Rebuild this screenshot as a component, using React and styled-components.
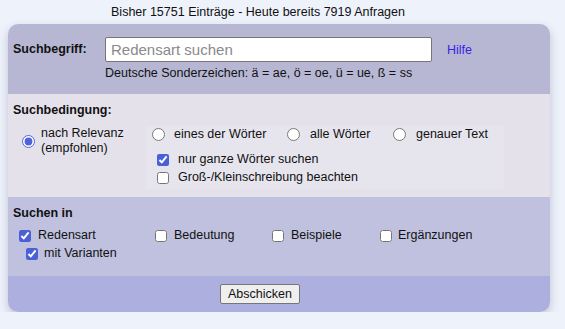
import React from 'react';
import styled, { createGlobalStyle } from 'styled-components';

const GlobalStyle = createGlobalStyle`
  body {
    margin: 0;
    background: #eef2fb;
    font-family: 'Liberation Sans', Arial, sans-serif;
    font-size: 12.5px;
    color: #111;
  }
`;

const Page = styled.div`
  padding: 4px 8px 0 8px;
`;

const Stats = styled.div`
  width: 500px;
  text-align: center;
  line-height: 16px;
  height: 20px;
`;

const Card = styled.form`
  width: 542px;
  border-radius: 10px;
  overflow: hidden;
  box-shadow: 0 4px 10px rgba(60, 60, 90, 0.25);
`;

const Section = styled.div`
  background: ${({ $bg }) => $bg};
  padding: ${({ $pad }) => $pad};
`;

const Heading = styled.div`
  font-weight: bold;
  line-height: 15px;
`;

const TermRow = styled.div`
  display: grid;
  grid-template-columns: 92px 327px auto;
  align-items: center;
`;

const SearchInput = styled.input`
  box-sizing: border-box;
  width: 327px;
  height: 25px;
  margin: 0;
  padding: 0 5px;
  border: 1px solid #767676;
  border-radius: 2px;
  font-family: 'Liberation Sans', Arial, sans-serif;
  font-size: 15px;
  background: #fff;
  &::placeholder {
    color: #8a8a8a;
  }
`;

const HelpLink = styled.a`
  color: #3a1fe6;
  text-decoration: none;
  padding-left: 15px;
`;

const Hint = styled.div`
  grid-column: 2 / 4;
  margin-top: 4px;
  line-height: 15px;
`;

const ConditionGrid = styled.div`
  display: grid;
  grid-template-columns: 135px auto;
  margin-top: 8px;
`;

const Relevance = styled.label`
  display: flex;
  align-items: center;
  gap: 6px;
  padding-left: 9px;
  align-self: start;
  height: 30px;
  line-height: 15px;
`;

const Options = styled.div`
  display: flex;
  flex-direction: column;
  padding: 0 0 4px 6px;
  margin-left: -2px;
  background: #e6e4ed;
  width: 352px;
`;

const RadioRow = styled.div`
  display: flex;
  height: 16px;
  align-items: center;
`;

const Choice = styled.label`
  display: flex;
  align-items: center;
  gap: ${({ $gap }) => $gap || 7}px;
  width: ${({ $w }) => ($w ? `${$w}px` : 'auto')};
  padding-left: ${({ $indent }) => $indent || 0}px;
  line-height: 15px;
  white-space: nowrap;
`;

const Radio = styled.input.attrs({ type: 'radio' })`
  width: 13px;
  height: 13px;
  margin: 0;
  accent-color: #4f63d8;
`;

const Check = styled.input.attrs({ type: 'checkbox' })`
  width: 12px;
  height: 12px;
  margin: 0;
  accent-color: #4b60d6;
`;

const CheckList = styled.div`
  display: flex;
  flex-direction: column;
  gap: 3px;
  margin-top: 10px;
  padding-left: 5px;
`;

const FieldGrid = styled.div`
  display: grid;
  grid-template-columns: 136px 117px 108px auto;
  row-gap: 3px;
  margin-top: 7px;
  padding-left: 6px;
`;

const Submit = styled.div`
  display: flex;
  padding-left: 212px;
`;

const Button = styled.button`
  font-family: 'Liberation Sans', Arial, sans-serif;
  font-size: 12.5px;
  height: 20px;
  padding: 0 7px;
  background: #efefef;
  border: 1px solid #767676;
  border-radius: 2px;
  color: #111;
`;

export default function App() {
  return (
    <Page>
      <GlobalStyle />
      <Stats>Bisher 15751 Einträge - Heute bereits 7919 Anfragen</Stats>
      <Card onSubmit={(e) => e.preventDefault()}>
        <Section $bg="#b7b7d4" $pad="13px 5px 13px 5px">
          <TermRow>
            <Heading>Suchbegriff:</Heading>
            <SearchInput placeholder="Redensart suchen" />
            <HelpLink href="#">Hilfe</HelpLink>
            <Hint>Deutsche Sonderzeichen: ä = ae, ö = oe, ü = ue, ß = ss</Hint>
          </TermRow>
        </Section>
        <Section $bg="#e4e1eb" $pad="9px 5px 8px 5px">
          <Heading>Suchbedingung:</Heading>
          <ConditionGrid>
            <Relevance>
              <Radio name="mode" defaultChecked />
              <span>
                nach Relevanz
                <br />
                (empfohlen)
              </span>
            </Relevance>
            <Options>
              <RadioRow>
                <Choice $w={135} $gap={9}>
                  <Radio name="mode" />
                  eines der Wörter
                </Choice>
                <Choice $w={106} $gap={10}>
                  <Radio name="mode" />
                  alle Wörter
                </Choice>
                <Choice $gap={10}>
                  <Radio name="mode" />
                  genauer Text
                </Choice>
              </RadioRow>
              <CheckList>
                <Choice $gap={9}>
                  <Check defaultChecked />
                  nur ganze Wörter suchen
                </Choice>
                <Choice $gap={9}>
                  <Check />
                  Groß-/Kleinschreibung beachten
                </Choice>
              </CheckList>
            </Options>
          </ConditionGrid>
        </Section>
        <Section $bg="#bfc1de" $pad="9px 5px 15px 5px">
          <Heading>Suchen in</Heading>
          <FieldGrid>
            <Choice $gap={7}>
              <Check defaultChecked />
              Redensart
            </Choice>
            <Choice $gap={7}>
              <Check />
              Bedeutung
            </Choice>
            <Choice $gap={7}>
              <Check />
              Beispiele
            </Choice>
            <Choice $gap={6}>
              <Check />
              Ergänzungen
            </Choice>
            <Choice $gap={6} $indent={7}>
              <Check defaultChecked />
              mit Varianten
            </Choice>
          </FieldGrid>
        </Section>
        <Section $bg="#adb0de" $pad="8px 0 8px 0">
          <Submit>
            <Button type="submit">Abschicken</Button>
          </Submit>
        </Section>
      </Card>
    </Page>
  );
}
